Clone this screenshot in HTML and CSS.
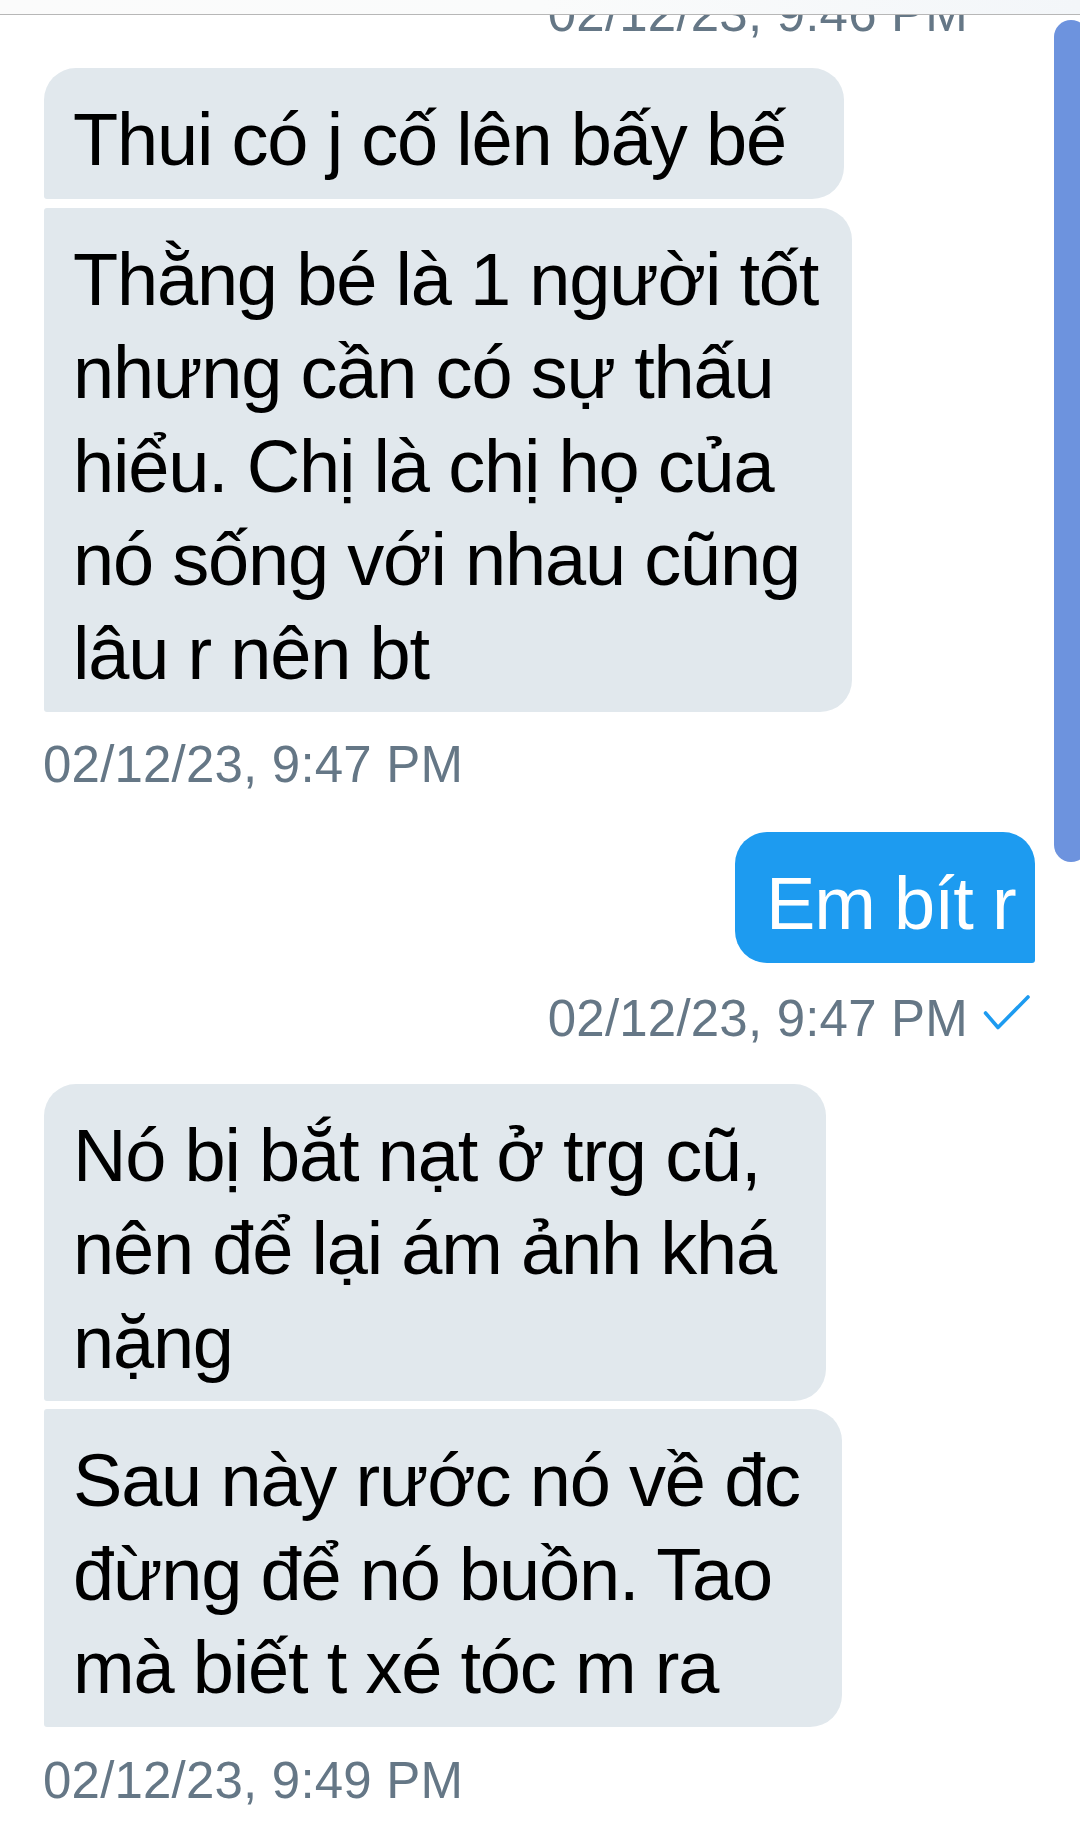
FILE: index.html
```html
<!DOCTYPE html>
<html lang="vi">
<head>
<meta charset="utf-8">
<title>Tin nhắn</title>
<link rel="stylesheet" href="styles.css">
</head>
<body>
<div class="screen">
  <div class="topbar"></div>
  <div class="thread">
    <div class="ts ts-sent ts-first">02/12/23, 9:46 PM</div>

    <div class="group group-first">
      <div class="bubble recv first w1">Thui có j cố lên bấy bế</div>
      <div class="bubble recv w2">Thằng bé là 1 người tốt<br>nhưng cần có sự thấu<br>hiểu. Chị là chị họ của<br>nó sống với nhau cũng<br>lâu r nên bt</div>
    </div>
    <div class="ts ts-recv ts-a">02/12/23, 9:47 PM</div>

    <div class="group group-sent">
      <div class="bubble sent w3">Em bít r</div>
    </div>
    <div class="ts ts-sent ts-b">
      <span>02/12/23, 9:47 PM</span>
      <svg class="check" width="48" height="40" viewBox="0 0 48 40" aria-hidden="true">
        <polyline points="2.5,18 15,32.5 45,2" fill="none" stroke="#1d9bf0" stroke-width="3.6" stroke-linecap="round" stroke-linejoin="round"/>
      </svg>
    </div>

    <div class="group group-second">
      <div class="bubble recv first w4">Nó bị bắt nạt ở trg cũ,<br>nên để lại ám ảnh khá<br>nặng</div>
      <div class="bubble recv w5">Sau này rước nó về đc<br>đừng để nó buồn. Tao<br>mà biết t xé tóc m ra</div>
    </div>
    <div class="ts ts-recv ts-c">02/12/23, 9:49 PM</div>
  </div>
  <div class="scrollbar"></div>
</div>
</body>
</html>
```
FILE: styles.css
```css
* {
  box-sizing: border-box;
}

html, body {
  margin: 0;
  padding: 0;
  background: #ffffff;
}

.screen {
  position: relative;
  width: 1080px;
  height: 1833px;
  overflow: hidden;
  background: #ffffff;
  font-family: "Liberation Sans", Arial, "Noto Sans", sans-serif;
}

.topbar {
  height: 15px;
  background: linear-gradient(to right, #fbfbfb 0%, #fafbfb 50%, #f3f6f9 100%);
  border-bottom: 1.5px solid #b7b7b7;
}

.thread {
  overflow: hidden;
  display: flex;
  flex-direction: column;
  height: 1818px;
}

.group {
  display: flex;
  flex-direction: column;
  gap: 8px;
  padding-left: 44px;
}

.group-first {
  margin-top: 26px;
  gap: 9px;
}

.group-sent {
  margin-top: 39px;
  align-items: flex-end;
  padding-left: 0;
  padding-right: 45px;
}

.group-second {
  margin-top: 37px;
}

.bubble {
  font-size: 74px;
  line-height: 93.5px;
  letter-spacing: -1.2px;
  white-space: nowrap;
  padding: 25px 20px 12px 29px;
  border-radius: 32px;
}

.recv {
  background: #e1e8ed;
  color: #000000;
  border-bottom-left-radius: 3px;
  border-top-left-radius: 3px;
}

.recv.first {
  border-top-left-radius: 32px;
}

.sent {
  background: #1d9bf0;
  color: #ffffff;
  padding-left: 31px;
  border-bottom-right-radius: 3px;
}

.w1 { width: 800px; }
.w2 { width: 808px; }
.w3 { width: 300px; }
.w4 { width: 782px; }
.w5 { width: 798px; }

.ts {
  font-size: 51px;
  line-height: 56px;
  letter-spacing: 0.2px;
  color: #657786;
  white-space: nowrap;
}

.ts-recv {
  padding-left: 43px;
}

.ts-sent {
  display: flex;
  justify-content: flex-end;
  align-items: flex-start;
  padding-right: 112px;
}

.ts-first {
  margin-top: -29px;
}

.ts-b {
  margin-top: 28px;
  padding-right: 49px;
  gap: 15px;
}

.check {
  display: block;
  margin-top: 4px;
  flex: none;
}

.ts-a {
  margin-top: 25px;
}

.ts-c {
  margin-top: 26px;
}

.scrollbar {
  position: absolute;
  left: 1054px;
  top: 20px;
  width: 34px;
  height: 842px;
  border-radius: 17px;
  background: #6d93de;
}
```
